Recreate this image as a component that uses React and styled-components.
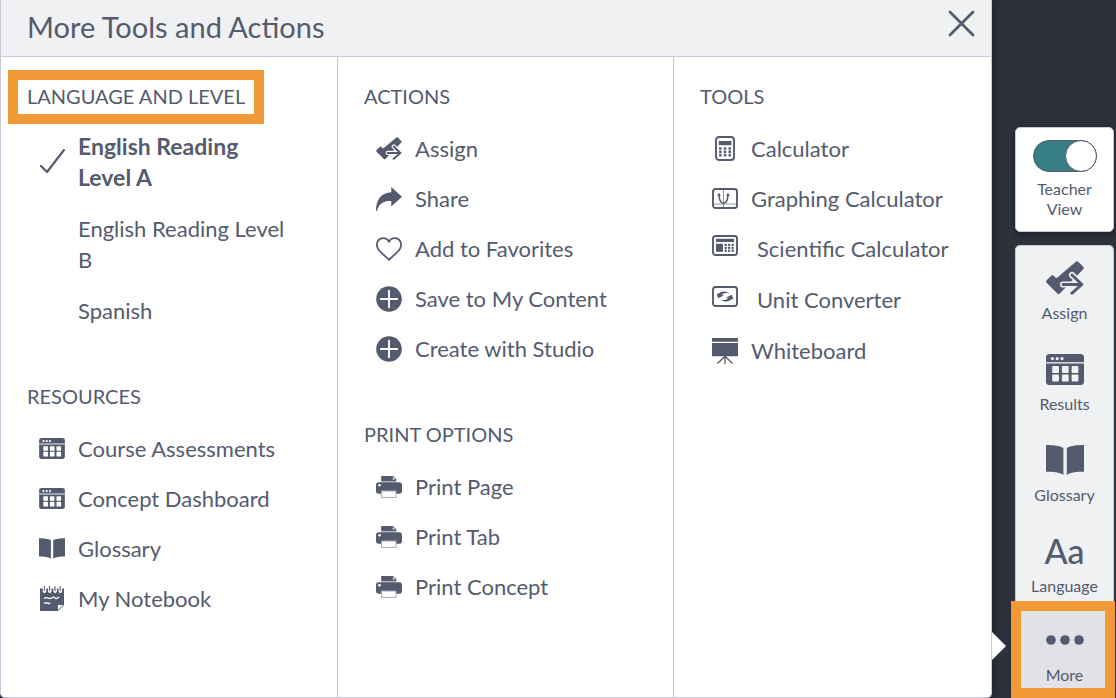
import React from "react";
import styled, { createGlobalStyle, css } from "styled-components";

const ink = "#545b6e";
const line = "#c5c8d8";
const pale = "#f0f1f3";
const orange = "#f09936";

const GlobalStyle = createGlobalStyle`
  *, *::before, *::after { box-sizing: border-box; }
  body {
    margin: 0;
    background: #2d313b;
    color: ${ink};
    font-family: Lato, "Open Sans", sans-serif;
  }
`;

const Page = styled.div`
  display: flex;
  min-height: 100vh;
`;

const Panel = styled.main`
  position: relative;
  flex: 1;
  display: flex;
  flex-direction: column;
  background: #fff;
  border: 1px solid ${line};
  border-top: 0;
  border-radius: 0 0 5px 5px;
  box-shadow: 2px 0 8px rgba(0, 0, 0, 0.35);
`;

const PanelHeader = styled.header`
  display: flex;
  align-items: flex-start;
  justify-content: space-between;
  height: 57px;
  padding: 7px 16px 0 26px;
  background: ${pale};
  border-bottom: 1px solid ${line};
`;

const Title = styled.h1`
  margin: 0;
  font-size: 29px;
  font-weight: 400;
  line-height: 40px;
`;

const CloseButton = styled.button`
  display: flex;
  margin: 3px 0 0;
  padding: 0;
  border: 0;
  background: none;
  color: inherit;
`;

const Columns = styled.div`
  flex: 1;
  display: grid;
  grid-template-columns: 336fr 336fr 318fr;
`;

const Column = styled.div`
  min-width: 0;
  padding: 27px 38px 32px 26px;

  & + & {
    border-left: 1px solid ${line};
  }
`;

const Section = styled.section`
  & + & { margin-top: 58px; }
`;

const frame = css`
  position: relative;

  &::after {
    content: "";
    position: absolute;
    border: 10px solid ${orange};
    pointer-events: none;
  }
`;

const SectionTitle = styled.h2`
  margin: 0;
  font-size: 20px;
  font-weight: 400;
  line-height: 24px;
  text-transform: uppercase;
  ${(p) => p.$framed && css`
    ${frame}
    &::after {
      top: -14px;
      left: -19px;
      width: 256px;
      height: 54px;
    }
  `}
`;

const List = styled.ul`
  display: flex;
  flex-direction: column;
  gap: ${(p) => (p.$wraps ? "20px" : "19px")};
  margin: ${(p) => (p.$wraps ? "23px" : "25px")} 0 0;
  padding: 0 0 0 12px;
  list-style: none;
`;

const ItemButton = styled.button`
  display: flex;
  align-items: center;
  gap: ${(p) => (p.$raised ? "19px" : "13px")};
  width: 100%;
  padding: 0;
  border: 0;
  background: none;
  color: inherit;
  font-family: inherit;
  font-size: ${(p) => (p.$current ? "23px" : "22px")};
  font-weight: ${(p) => (p.$current ? 700 : 400)};
  line-height: ${(p) => (p.$raised ? "32px" : "31px")};
  text-align: left;
`;

const IconSlot = styled.span`
  flex: none;
  display: flex;
  justify-content: center;
  width: 26px;
  padding-bottom: ${(p) => (p.$raised ? "8px" : "0")};
`;

const Pointer = styled.span`
  position: absolute;
  right: -15px;
  bottom: 37px;
  width: 14px;
  height: 28px;
  background: #fff;
  clip-path: polygon(0 0, 100% 50%, 0 100%);
`;

const Rail = styled.aside`
  flex: none;
  display: flex;
  flex-direction: column;
  gap: 13px;
  width: 124px;
  padding: 127px 2px 0 23px;
`;

const ViewCard = styled.label`
  display: flex;
  flex-direction: column;
  align-items: center;
  gap: 7px;
  padding: 12px 16px;
  border: 1px solid ${line};
  border-radius: 5px;
  background: #fff;
  box-shadow: 0 2px 6px rgba(0, 0, 0, 0.4);
  font-size: 16px;
  line-height: 20px;
  text-align: center;
`;

const Toggle = styled.input`
  appearance: none;
  display: flex;
  justify-content: flex-end;
  width: 64px;
  height: 32px;
  margin: 0;
  border: 1px solid ${ink};
  border-radius: 16px;
  background: #387f85;

  &::before {
    content: "";
    width: 32px;
    height: 32px;
    margin: -1px;
    border: 1px solid ${ink};
    border-radius: 50%;
    background: #fff;
  }
`;

const Toolbar = styled.nav`
  flex: 1;
  display: flex;
  flex-direction: column;
  border: 1px solid ${line};
  border-bottom: 0;
  border-radius: 5px 5px 0 0;
  background: ${pale};
`;

const RailButton = styled.button`
  display: flex;
  flex-direction: column;
  align-items: center;
  gap: 5px;
  padding: 12px 0 14px;
  border: 0;
  background: none;
  color: inherit;
  font-family: inherit;
  font-size: 16px;
  line-height: 20px;
  ${(p) => p.$active && css`
    ${frame}
    padding: 10px 0 13px;
    background: #e1e2e6;
    &::after { inset: -9px -2px 0 -5px; }
  `}
`;

const RailIcon = styled.span`
  display: flex;
  align-items: center;
  justify-content: center;
  height: 40px;
  font-size: 34px;
  font-weight: 500;
  line-height: 40px;
`;

const Svg = ({ w, h, box, children }) => (
  <svg width={w} height={h} viewBox={box || `0 0 ${w} ${h}`} fill="currentColor" aria-hidden="true">
    {children}
  </svg>
);

const CheckIcon = () => (
  <Svg w={26} h={26}>
    <path d="M2 17l6 6L25 1" fill="none" stroke="currentColor" strokeWidth="2.2" strokeLinecap="round" strokeLinejoin="round" />
  </Svg>
);

const CloseIcon = () => (
  <Svg w={27} h={27}>
    <path d="M2 2l23 23M25 2L2 25" stroke="currentColor" strokeWidth="2.8" strokeLinecap="round" />
  </Svg>
);

const AssignIcon = ({ w = 26, h = 23, bg = "#fff" }) => (
  <Svg w={w} h={h} box="0 0 38 34">
    <path d="M.6 19.3l4.6-4.6q1.2-1.2 2.4 0l1.8 1.7q1 .8 2 0L29.8.8q1.2-1.2 2.4 0l5 5q1.2 1.2 0 2.4L13.8 32.6q-1.2 1.2-2.4 0L.6 21.7q-1-1.2 0-2.4z" />
    <g fill="none" strokeLinecap="round" strokeLinejoin="round">
      <path d="M17 23.5h18M26 14l9.8 9.5L26 32" stroke={bg} strokeWidth="6.2" />
      <path d="M17 23.5h18M26 14l9.8 9.5L26 32.2" stroke="currentColor" strokeWidth="3" />
    </g>
  </Svg>
);

const TableIcon = ({ w = 26, h = 21, bg = "#fff" }) => (
  <Svg w={w} h={h} box="0 0 38 31">
    <rect width="38" height="31" rx="3.5" />
    <g fill={bg}>
      <rect y="8.2" width="38" height="1.3" />
      <circle cx="6.4" cy="4.6" r="1.6" />
      <circle cx="11.2" cy="4.6" r="1.6" />
      <circle cx="16" cy="4.6" r="1.6" />
      {[6.2, 15.9, 25.6].map((x) => (
        <React.Fragment key={x}>
          <rect x={x} y="12" width="6.8" height="7" rx="1" />
          <rect x={x} y="20.4" width="6.8" height="7" rx="1" />
        </React.Fragment>
      ))}
    </g>
  </Svg>
);

const BookIcon = ({ w = 26, h = 21 }) => (
  <Svg w={w} h={h} box="0 0 38 30">
    <path d="M0 0C7 0 13.5 .8 17.4 3V30C13.5 27.2 7 26.8 0 26.8zM38 0C31 0 24.5 .8 20.8 3V30C24.5 27.2 31 26.8 38 26.8z" />
  </Svg>
);

const NotebookIcon = () => (
  <Svg w={24} h={25}>
    <path d="M0 2.5H24V18.5L17.5 25H0z" />
    <path d="M24 18.5h-5.5q-1 0-1 1V25z" fill="#fff" stroke="currentColor" strokeWidth=".9" />
    {[3.5, 8.8, 14.1, 19.4].map((x) => (
      <g key={x}>
        <path d={`M${x} 0v5.5q1 1.5 2 0V2`} fill="none" stroke="#fff" strokeWidth="1.5" />
        <path d={`M${x + 0.8} 0v4.5`} stroke="currentColor" strokeWidth="1" />
      </g>
    ))}
    <path d="M4 12.5q2-1.5 4-.5t4-.3 3 .3 4-1M4 17.5q2-1.5 3-.5t3.5 0" fill="none" stroke="#fff" strokeWidth="1.3" />
  </Svg>
);

const ShareIcon = () => (
  <Svg w={26} h={24}>
    <path d="M15.3 0L26 9.8 15.3 19.5V14C8 13.7 3.3 16 .8 24H0C0 12 5.5 5.8 15.3 5.3z" />
  </Svg>
);

const HeartIcon = () => (
  <Svg w={26} h={24}>
    <path d="M13 22.8C10.5 20 3.8 15.3 1.8 11.3 -.6 6.3 2.3 1.2 7 1.2c2.7 0 4.8 1.3 6 3.7 1.2-2.4 3.3-3.7 6-3.7 4.7 0 7.6 5.1 5.2 10.1C22.2 15.3 15.5 20 13 22.8z" fill="none" stroke="currentColor" strokeWidth="1.8" strokeLinejoin="round" />
  </Svg>
);

const PlusIcon = () => (
  <Svg w={26} h={26}>
    <circle cx="13" cy="13" r="12.8" />
    <path d="M13 4.8v16.4M4.8 13h16.4" stroke="#fff" strokeWidth="1.9" strokeLinecap="round" />
  </Svg>
);

const PrinterIcon = () => (
  <Svg w={26} h={22}>
    <path d="M5.2 0H17l3.2 3.2V5.5h-15z" />
    <path d="M16.8 1v2.4h2.4z" fill="#fff" />
    <path d="M5.2 5h15v1.5h-15z" fill="#b3b7c2" />
    <rect y="6.2" width="26" height="11.6" rx="2.8" />
    <circle cx="3.5" cy="9.3" r="1.3" fill="#fff" />
    <rect x="5.6" y="15" width="14.4" height="6.4" fill="#fff" stroke="#a5a9b5" strokeWidth="1" />
  </Svg>
);

const Keys = ({ xs, ys, s }) =>
  ys.map((y) => xs.map((x) => <rect key={`${x}-${y}`} x={x} y={y} width={s} height={s} rx=".8" />));

const CalculatorIcon = () => (
  <Svg w={20} h={25}>
    <rect x="1" y="1" width="18" height="23" rx="3" fill="none" stroke="currentColor" strokeWidth="1.9" />
    <rect x="3.8" y="5" width="12.6" height="4.2" />
    <Keys xs={[4, 8.7, 13.4]} ys={[11.2, 14.6, 18]} s={2.6} />
  </Svg>
);

const GraphIcon = () => (
  <Svg w={26} h={21}>
    <rect x="1" y="1" width="24" height="19" rx="2.5" fill="none" stroke="currentColor" strokeWidth="1.9" />
    <path d="M11.5 1.5v18M1.5 16h23" stroke="currentColor" strokeWidth=".9" opacity=".7" />
    <path d="M7 6.5c.2 5 1.8 8.7 4.5 8.7s4.3-3.7 4.5-8.7" fill="none" stroke="currentColor" strokeWidth="1.5" />
    <path d="M7 4.8l1.9 3H5.1zM16 4.8l1.9 3h-3.8z" />
  </Svg>
);

const ScientificIcon = () => (
  <Svg w={26} h={21}>
    <rect x="1" y="1" width="24" height="19" rx="2.5" fill="none" stroke="currentColor" strokeWidth="1.9" />
    <rect x="4" y="3.8" width="18" height="3.2" />
    <rect x="4" y="8.8" width="7" height="8" />
    <Keys xs={[12.5, 16, 19.5]} ys={[8.8, 11.7, 14.6]} s={2.3} />
  </Svg>
);

const ConverterIcon = () => (
  <Svg w={26} h={21}>
    <rect x="1" y="1" width="24" height="19" rx="2.5" fill="none" stroke="currentColor" strokeWidth="1.9" />
    <path d="M4.5 7.5l1.7.4C8.5 5 13.5 4.5 17.5 7.5c-3.5-1-6-.5-7.5 1.3l1.8.7-5.6 2.8z" />
    <path d="M21.5 13.5l-1.7-.4C17.5 16 12.5 16.5 8.5 13.5c3.5 1 6 .5 7.5-1.3l-1.8-.7 5.6-2.8z" />
  </Svg>
);

const WhiteboardIcon = () => (
  <Svg w={26} h={26}>
    <path d="M0 0h26v3.8H0zM0 5h26v13.3H0z" />
    <path d="M13 18v8M13 18.3L5.5 25.5M13 18.3l7.5 7.2" stroke="currentColor" strokeWidth="1.3" />
  </Svg>
);

const DotsIcon = () => (
  <Svg w={38} h={10}>
    <circle cx="5" cy="5" r="4.8" />
    <circle cx="19" cy="5" r="4.8" />
    <circle cx="33" cy="5" r="4.8" />
  </Svg>
);

const Item = ({ icon, raised, current, children }) => (
  <li>
    <ItemButton type="button" $raised={raised} $current={current} aria-current={current ? "true" : undefined}>
      <IconSlot $raised={raised}>{icon}</IconSlot>
      <span>{children}</span>
    </ItemButton>
  </li>
);

const Group = ({ title, framed, wraps, children }) => (
  <Section>
    <SectionTitle $framed={framed}>{title}</SectionTitle>
    <List $wraps={wraps}>{children}</List>
  </Section>
);

const RailTool = ({ icon, active, children }) => (
  <RailButton type="button" $active={active}>
    <RailIcon aria-hidden="true">{icon}</RailIcon>
    <span>{children}</span>
  </RailButton>
);

export default function App() {
  return (
    <>
      <GlobalStyle />
      <Page>
        <Panel>
          <PanelHeader>
            <Title>More Tools and Actions</Title>
            <CloseButton type="button" aria-label="Close"><CloseIcon /></CloseButton>
          </PanelHeader>
          <Columns>
            <Column>
              <Group title="Language and Level" framed wraps>
                <Item icon={<CheckIcon />} current>{"English Reading Level\u00a0A"}</Item>
                <Item>English Reading Level B</Item>
                <Item>Spanish</Item>
              </Group>
              <Group title="Resources">
                <Item icon={<TableIcon />}>Course Assessments</Item>
                <Item icon={<TableIcon />}>Concept Dashboard</Item>
                <Item icon={<BookIcon />}>Glossary</Item>
                <Item icon={<NotebookIcon />}>My Notebook</Item>
              </Group>
            </Column>
            <Column>
              <Group title="Actions">
                <Item icon={<AssignIcon />}>Assign</Item>
                <Item icon={<ShareIcon />}>Share</Item>
                <Item icon={<HeartIcon />}>Add to Favorites</Item>
                <Item icon={<PlusIcon />}>Save to My Content</Item>
                <Item icon={<PlusIcon />}>Create with Studio</Item>
              </Group>
              <Group title="Print Options">
                <Item icon={<PrinterIcon />}>Print Page</Item>
                <Item icon={<PrinterIcon />}>Print Tab</Item>
                <Item icon={<PrinterIcon />}>Print Concept</Item>
              </Group>
            </Column>
            <Column>
              <Group title="Tools">
                <Item icon={<CalculatorIcon />}>Calculator</Item>
                <Item icon={<GraphIcon />}>Graphing Calculator</Item>
                <Item icon={<ScientificIcon />} raised>Scientific Calculator</Item>
                <Item icon={<ConverterIcon />} raised>Unit Converter</Item>
                <Item icon={<WhiteboardIcon />}>Whiteboard</Item>
              </Group>
            </Column>
          </Columns>
          <Pointer />
        </Panel>
        <Rail>
          <ViewCard>
            <Toggle type="checkbox" role="switch" defaultChecked />
            <span>Teacher View</span>
          </ViewCard>
          <Toolbar aria-label="Tools">
            <RailTool icon={<AssignIcon w={38} h={34} bg={pale} />}>Assign</RailTool>
            <RailTool icon={<TableIcon w={38} h={31} bg={pale} />}>Results</RailTool>
            <RailTool icon={<BookIcon w={38} h={30} />}>Glossary</RailTool>
            <RailTool icon="Aa">Language</RailTool>
            <RailTool icon={<DotsIcon />} active>More</RailTool>
          </Toolbar>
        </Rail>
      </Page>
    </>
  );
}
